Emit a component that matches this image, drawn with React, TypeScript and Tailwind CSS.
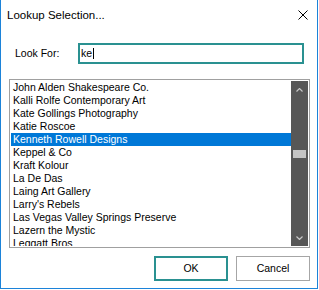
import React from "react";

const items = [
  "John Alden Shakespeare Co.",
  "Kalli Rolfe Contemporary Art",
  "Kate Gollings Photography",
  "Katie Roscoe",
  "Kenneth Rowell Designs",
  "Keppel & Co",
  "Kraft Kolour",
  "La De Das",
  "Laing Art Gallery",
  "Larry's Rebels",
  "Las Vegas Valley Springs Preserve",
  "Lazern the Mystic",
  "Leggatt Bros",
];

export default function App() {
  return (
    <div
      className="w-[318px] h-[289px] bg-white border-l border-r border-b border-[#1c83d9] flex flex-col text-black"
      style={{ fontFamily: '"Liberation Sans", Arial, sans-serif' }}
    >
      {/* title bar */}
      <div className="h-[32px] flex items-center justify-between pl-[6px] pr-[9px] shrink-0">
        <span className="text-[11.5px]">Lookup Selection...</span>
        <svg width="10" height="10" viewBox="0 0 10 10" className="self-start mt-[10px]">
          <path d="M0.5 0.5 L9.5 9.5 M9.5 0.5 L0.5 9.5" stroke="#000" strokeWidth="1" fill="none" />
        </svg>
      </div>

      {/* look for row */}
      <div className="mt-[11px] flex items-center pl-[14px] shrink-0">
        <span className="w-[63px] text-[10.5px]">Look For:</span>
        <div className="w-[226px] h-[21px] border-2 border-[#2a9191] flex items-center pl-[1px] text-[10.5px]">
          <span>ke</span>
          <span className="inline-block w-px h-[11px] bg-black ml-px" />
        </div>
      </div>

      {/* list */}
      <div className="mt-[15px] ml-[8px] w-[301px] h-[169px] border border-[#a0a0a0] p-px flex shrink-0">
        <div className="flex-1 overflow-hidden text-[10.5px]">
          {items.map((it, i) => (
            <div
              key={it}
              className={
                "h-[13px] leading-[13px] pl-[2px] whitespace-nowrap " +
                (i === 4 ? "bg-[#0078d7] text-white" : "")
              }
            >
              {it}
            </div>
          ))}
        </div>
        <div className="w-[17px] bg-[#575757] flex flex-col">
          <div className="h-[17px] flex items-center justify-center">
            <svg width="7" height="4" viewBox="0 0 7 4">
              <path d="M0.5 3.5 L3.5 0.5 L6.5 3.5" stroke="#c8c8c8" strokeWidth="1.2" fill="none" />
            </svg>
          </div>
          <div className="flex-1">
            <div className="mt-[52px] mx-[2px] h-[8px] bg-[#c4c4c4]" />
          </div>
          <div className="h-[17px] flex items-center justify-center">
            <svg width="7" height="4" viewBox="0 0 7 4">
              <path d="M0.5 0.5 L3.5 3.5 L6.5 0.5" stroke="#c8c8c8" strokeWidth="1.2" fill="none" />
            </svg>
          </div>
        </div>
      </div>

      {/* buttons */}
      <div className="mt-[8px] flex justify-end gap-[8px] pr-[7px] shrink-0">
        <button className="w-[74px] h-[25px] border-2 border-[#2a9191] bg-white text-[10.5px] flex items-center justify-center">
          OK
        </button>
        <button className="w-[74px] h-[25px] border border-[#a6a6a6] bg-white text-[10.5px] flex items-center justify-center">
          Cancel
        </button>
      </div>
    </div>
  );
}
